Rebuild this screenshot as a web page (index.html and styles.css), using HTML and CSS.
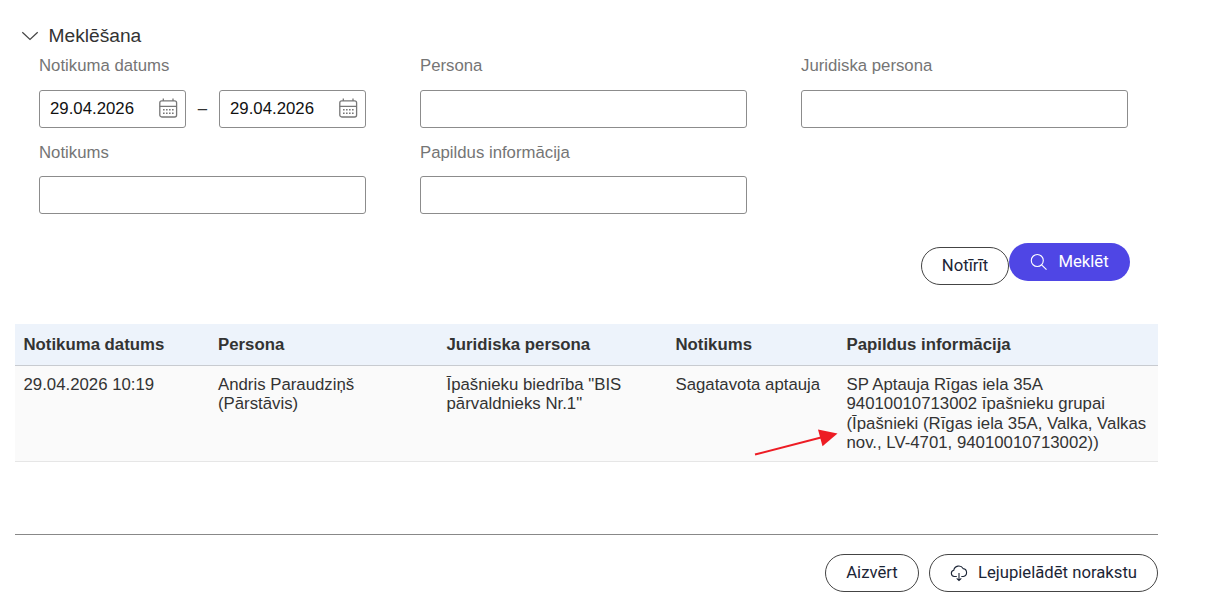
FILE: index.html
```html
<!DOCTYPE html>
<html lang="lv">
<head>
<meta charset="utf-8">
<title>Meklēšana</title>
<link rel="stylesheet" href="styles.css">
</head>
<body>
<main class="page">
  <section class="search">
    <h2 class="search-title">
      <svg class="chevron" viewBox="0 0 18 10" width="18" height="10"><path d="M1.3 1.2 9 8.5l7.700-7.300" fill="none" stroke="#444" stroke-width="1.200"/></svg>
      <span>Meklēšana</span>
    </h2>
    <form class="fields">
      <div class="field">
        <label class="label">Notikuma datums</label>
        <div class="range">
          <div class="input date"><span>29.04.2026</span>
            <svg class="cal" viewBox="0 0 20 21" width="20" height="21"><g fill="none" stroke="#777" stroke-width="1.300"><rect x="1.800" y="2.800" width="16.800" height="16.200" rx="2"/><path d="M1.800 8.300h16.800M5.300.500v2.500M15 .500v2.500"/></g><path d="M5 11.800h1.600M8 11.800h1.600M11 11.800h1.600M14 11.800h1.600M5 15.300h1.600M8 15.300h1.600M11 15.300h1.600M14 15.300h1.600" stroke="#777" stroke-width="1.600"/></svg>
          </div>
          <span class="dash">–</span>
          <div class="input date"><span>29.04.2026</span>
            <svg class="cal" viewBox="0 0 20 21" width="20" height="21"><g fill="none" stroke="#777" stroke-width="1.300"><rect x="1.800" y="2.800" width="16.800" height="16.200" rx="2"/><path d="M1.800 8.300h16.800M5.300.500v2.500M15 .500v2.500"/></g><path d="M5 11.800h1.600M8 11.800h1.600M11 11.800h1.600M14 11.800h1.600M5 15.300h1.600M8 15.300h1.600M11 15.300h1.600M14 15.300h1.600" stroke="#777" stroke-width="1.600"/></svg>
          </div>
        </div>
      </div>
      <div class="field"><label class="label">Persona</label><div class="input"></div></div>
      <div class="field"><label class="label">Juridiska persona</label><div class="input"></div></div>
      <div class="field"><label class="label">Notikums</label><div class="input"></div></div>
      <div class="field"><label class="label">Papildus informācija</label><div class="input"></div></div>
    </form>
    <div class="search-actions">
      <button class="btn clear">Notīrīt</button>
      <button class="btn primary">
        <svg viewBox="0 0 18 18" width="18" height="18"><g fill="none" stroke="#fff" stroke-width="1.100"><circle cx="7.300" cy="7.500" r="6"/><path d="m11.600 11.800 4.900 4.900"/></g></svg>
        <span>Meklēt</span>
      </button>
    </div>
  </section>

  <div class="results">
    <table class="table">
      <colgroup><col class="c-date"><col class="c-person"><col class="c-legal"><col class="c-event"><col class="c-info"></colgroup>
      <thead>
        <tr><th>Notikuma datums</th><th>Persona</th><th>Juridiska persona</th><th>Notikums</th><th>Papildus informācija</th></tr>
      </thead>
      <tbody>
        <tr>
          <td>29.04.2026 10:19</td>
          <td>Andris Paraudziņš<br>(Pārstāvis)</td>
          <td>Īpašnieku biedrība "BIS<br>pārvaldnieks Nr.1"</td>
          <td>Sagatavota aptauja</td>
          <td>SP Aptauja Rīgas iela 35A<br>94010010713002 īpašnieku grupai<br>(Īpašnieki (Rīgas iela 35A, Valka, Valkas<br>nov., LV-4701, 94010010713002))</td>
        </tr>
      </tbody>
    </table>
    <svg class="arrow" viewBox="0 0 84 28" width="84" height="28"><path d="M1 25.500 67 8.500" stroke="#ed1c24" stroke-width="1.900" fill="none"/><path d="M64 .500 83.500 4.500 68.500 17.300z" fill="#ed1c24"/></svg>
  </div>

  <footer class="footer">
    <button class="btn close">Aizvērt</button>
    <button class="btn download">
      <svg viewBox="0 0 18 18" width="18" height="18"><g fill="none" stroke="#1c2536" stroke-width="1.100"><path d="M6.800 12.500H4.300a3.200 3.200 0 0 1-.5-6.300 5 5 0 0 1 9.300-1.600 4 4 0 0 1 .2 7.900h-2M9 9v7.300M6.700 14.400l2.300 2.200 2.300-2.200"/></g></svg>
      <span>Lejupielādēt norakstu</span>
    </button>
  </footer>
</main>
</body>
</html>
```
FILE: styles.css
```css
* { box-sizing: border-box; }
body {
  margin: 0;
  background: #fff;
  color: #333;
  font: 16.8px/19.5px "Liberation Sans", Arial, sans-serif;
}
.page {
  width: 1158px;
  padding: 24px 0 0 15px;
}
.search-title {
  display: flex;
  align-items: center;
  gap: 9.5px;
  height: 24px;
  margin: 0;
  padding-left: 6px;
  font-size: 19.2px;
  font-weight: 400;
  white-space: nowrap;
}
.chevron { flex: none; }
.fields {
  display: grid;
  grid-template-columns: repeat(3, 327px);
  column-gap: 54px;
  row-gap: 15px;
  padding: 8px 0 0 24px;
}
.label {
  display: block;
  height: 33.500px;
  color: #757575;
  font-size: 16.75px;
  white-space: nowrap;
}
.input {
  height: 38px;
  border: 1px solid #8c8c8c;
  border-radius: 3px;
}
.range {
  display: flex;
  justify-content: space-between;
  align-items: center;
}
.date {
  display: flex;
  align-items: center;
  justify-content: space-between;
  width: 147px;
  padding: 0 7.500px 0 10px;
  color: #111;
}
.search-actions {
  display: flex;
  justify-content: flex-end;
  align-items: flex-start;
  height: 81px;
  margin-top: 28.500px;
  padding-right: 28px;
}
.btn {
  display: flex;
  align-items: center;
  justify-content: center;
  height: 38.500px;
  padding: 0;
  border: 1px solid #444;
  border-radius: 20px;
  background: #fff;
  color: #1c2536;
  font: 16.700px/20px Roboto, sans-serif;
  white-space: nowrap;
}
.clear { width: 88px; margin-top: 4px; padding-top: 1px; }
.primary {
  width: 121px;
  gap: 10px;
  border: 0;
  background: #4f46e5;
  color: #fff;
}
.results { position: relative; }
.table {
  width: 1143px;
  table-layout: fixed;
  border-collapse: separate;
  border-spacing: 0;
}
.c-date { width: 194.500px; }
.c-person { width: 228.500px; }
.c-legal { width: 229px; }
.c-event { width: 171px; }
th {
  height: 42px;
  padding: 1px 0 0 8.500px;
  border-bottom: 1.500px solid #c8cbd0;
  background: #edf3fb;
  text-align: left;
  white-space: nowrap;
}
td {
  height: 96px;
  padding: 9px 0 0 8.500px;
  border-bottom: 1px solid #e6e6e6;
  background: #fafafa;
  vertical-align: top;
  white-space: nowrap;
}
.arrow {
  position: absolute;
  left: 739px;
  top: 105px;
}
.footer {
  display: flex;
  justify-content: flex-end;
  gap: 10px;
  margin-top: 72px;
  padding-top: 19px;
  border-top: 1px solid #888;
}
.close { width: 94px; }
.download { width: 229px; gap: 10px; }
```
